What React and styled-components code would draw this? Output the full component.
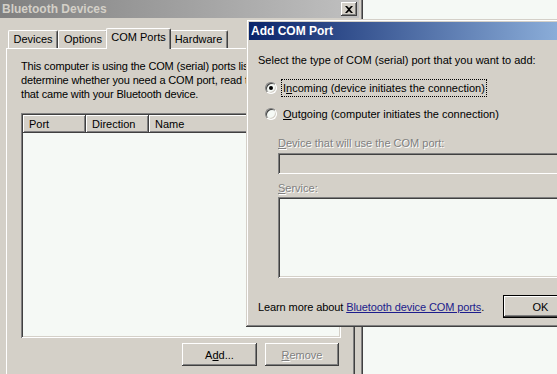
import React from 'react';
import styled, { createGlobalStyle, css } from 'styled-components';

const GlobalStyle = createGlobalStyle`
  html, body { margin: 0; padding: 0; }
  body {
    font-family: "Liberation Sans", Arial, sans-serif;
    font-size: 11px;
    color: #000;
  }
`;

const raised = css`
  box-shadow: inset -1px -1px #404040, inset 1px 1px #fff,
    inset -2px -2px #808080, inset 2px 2px #d4d0c8;
`;

const frame = css`
  box-shadow: inset -1px -1px #404040, inset 1px 1px #d4d0c8,
    inset -2px -2px #808080, inset 2px 2px #fff;
`;

const sunken = css`
  box-shadow: inset 1px 1px #808080, inset -1px -1px #fff,
    inset 2px 2px #404040, inset -2px -2px #d4d0c8;
`;

const Desktop = styled.div`
  position: relative;
  width: 557px;
  height: 374px;
  overflow: hidden;
  background: #f5f9f5;
`;

const Window = styled.div`
  position: absolute;
  left: ${(p) => p.$left}px;
  top: ${(p) => p.$top}px;
  width: ${(p) => p.$width}px;
  height: ${(p) => p.$height}px;
  box-sizing: border-box;
  padding: ${(p) => p.$pad}px;
  background: #d4d0c8;
  display: flex;
  flex-direction: column;
  ${frame}
`;

const TitleBar = styled.div`
  height: 18px;
  flex: none;
  display: flex;
  align-items: center;
  padding: 0 2px;
  background: ${(p) =>
    p.$active
      ? 'linear-gradient(to right, #0a246a, #a6caf0)'
      : 'linear-gradient(to right, #808080, #c0c0c0)'};
  color: ${(p) => (p.$active ? '#fff' : '#d4d0c8')};
  font-weight: bold;
  font-size: 12px;
`;

const TitleText = styled.span`
  flex: 1;
  white-space: nowrap;
`;

const CloseButton = styled.div`
  width: 16px;
  height: 14px;
  background: #d4d0c8;
  ${raised}
  display: flex;
  align-items: center;
  justify-content: center;
  svg { display: block; }
`;

const MainContent = styled.div`
  padding: 10px 4px 0 6px;
  display: flex;
  flex-direction: column;
`;

const TabStrip = styled.div`
  display: flex;
  align-items: flex-end;
  height: 20px;
  padding-left: 2px;
  position: relative;
  z-index: 1;
`;

const Tab = styled.div`
  box-sizing: border-box;
  width: ${(p) => p.$w}px;
  height: ${(p) => (p.$selected ? 21 : 18)}px;
  margin: ${(p) => (p.$selected ? '0 -2px -1px -2px' : '0')};
  position: relative;
  z-index: ${(p) => (p.$selected ? 2 : 1)};
  background: #d4d0c8;
  border-left: 1px solid #fff;
  border-top: 1px solid #fff;
  border-right: 1px solid #404040;
  border-radius: 2px 2px 0 0;
  box-shadow: inset -1px 0 #808080;
  display: flex;
  justify-content: center;
  padding-top: 2px;
  white-space: nowrap;
`;

const TabPanel = styled.div`
  width: 349px;
  height: 340px;
  box-sizing: border-box;
  border-top: 1px solid #fff;
  border-left: 1px solid #fff;
  border-right: 1px solid #404040;
  box-shadow: inset -1px 0 #808080;
  padding: 10px 0 0 14px;
`;

const Intro = styled.p`
  margin: 0;
  line-height: 14px;
  white-space: nowrap;
  letter-spacing: -0.15px;
`;

const ListView = styled.div`
  margin-top: 12px;
  width: 320px;
  height: 225px;
  box-sizing: border-box;
  padding: 2px;
  background: #f5f9f5;
  ${sunken}
`;

const HeaderRow = styled.div`
  display: flex;
  height: 18px;
`;

const HeaderCell = styled.div`
  box-sizing: border-box;
  width: ${(p) => (p.$w ? `${p.$w}px` : 'auto')};
  flex: ${(p) => (p.$w ? 'none' : '1')};
  background: #d4d0c8;
  ${raised}
  padding: 3px 0 0 6px;
`;

const ButtonRow = styled.div`
  width: 318px;
  display: flex;
  justify-content: flex-end;
  gap: 8px;
  margin-top: 5px;
`;

const Button = styled.div`
  box-sizing: border-box;
  width: ${(p) => p.$w}px;
  height: 23px;
  flex: none;
  background: #d4d0c8;
  display: flex;
  align-items: center;
  justify-content: center;
  color: ${(p) => (p.$disabled ? '#808080' : '#000')};
  text-shadow: ${(p) => (p.$disabled ? '1px 1px 0 #fff' : 'none')};
  ${(p) =>
    p.$default
      ? css`
          border: 1px solid #000;
          ${raised}
        `
      : raised}
`;

const DialogBody = styled.div`
  display: flex;
  flex-direction: column;
  padding: 0 0 0 9px;
`;

const Prompt = styled.div`
  margin-top: 14px;
  line-height: 13px;
  white-space: nowrap;
`;

const RadioRow = styled.div`
  display: flex;
  align-items: center;
  margin-top: ${(p) => p.$gap}px;
  padding-left: 7px;
  height: 18px;
`;

const Radio = styled.span`
  position: relative;
  width: 12px;
  height: 12px;
  box-sizing: border-box;
  border-radius: 50%;
  background: #f5f9f5;
  border: 1px solid;
  border-color: #808080 #fff #fff #808080;
  box-shadow: inset 1px 1px #404040, inset -1px -1px #d4d0c8;
  flex: none;
  &::after {
    content: '';
    display: ${(p) => (p.$checked ? 'block' : 'none')};
    position: absolute;
    left: 3px;
    top: 3px;
    width: 4px;
    height: 4px;
    border-radius: 50%;
    background: #000;
  }
`;

const RadioLabel = styled.span`
  margin-left: 4px;
  padding: 2px 1px;
  height: 18px;
  box-sizing: border-box;
  border: 1px dotted ${(p) => (p.$focused ? '#000' : 'transparent')};
  white-space: nowrap;
`;

const Field = styled.div`
  padding-left: 20px;
  display: flex;
  flex-direction: column;
`;

const FieldLabel = styled.div`
  margin-top: ${(p) => p.$gap}px;
  color: #808080;
  text-shadow: 1px 1px 0 #fff;
  line-height: 13px;
  white-space: nowrap;
`;

const ComboBox = styled.div`
  margin-top: 3px;
  height: 21px;
  background: #d4d0c8;
  ${sunken}
`;

const ServiceList = styled.div`
  margin-top: 2px;
  height: 81px;
  background: #f5f9f5;
  ${sunken}
`;

const Footer = styled.div`
  margin-top: 17px;
  display: flex;
  align-items: center;
`;

const FooterText = styled.div`
  width: 245px;
  white-space: nowrap;
  flex: none;
  letter-spacing: -0.1px;
`;

const Link = styled.span`
  color: #1c1c8c;
  text-decoration: underline;
`;

export default function App() {
  return (
    <Desktop>
      <GlobalStyle />
      <Window $left={-4} $top={-4} $width={367} $height={400} $pad={4}>
        <TitleBar>
          <TitleText>Bluetooth Devices</TitleText>
          <CloseButton>
            <svg width="8" height="7" viewBox="0 0 8 7">
              <path d="M0 0h2l2 2 2-2h2L5 3.5 8 7H6L4 5 2 7H0l3-3.5z" fill="#000" />
            </svg>
          </CloseButton>
        </TitleBar>
        <MainContent>
          <TabStrip>
            <Tab $w={50}>Devices</Tab>
            <Tab $w={50}>Options</Tab>
            <Tab $w={65} $selected>COM Ports</Tab>
            <Tab $w={59}>Hardware</Tab>
          </TabStrip>
          <TabPanel>
            <Intro>
              This computer is using the COM (serial) ports listed below. To
              <br />
              determine whether you need a COM port, read the documentation
              <br />
              that came with your Bluetooth device.
            </Intro>
            <ListView>
              <HeaderRow>
                <HeaderCell $w={63}>Port</HeaderCell>
                <HeaderCell $w={63}>Direction</HeaderCell>
                <HeaderCell>Name</HeaderCell>
              </HeaderRow>
            </ListView>
            <ButtonRow>
              <Button $w={75}>
                A<u>d</u>d...
              </Button>
              <Button $w={74} $disabled>
                <u>R</u>emove
              </Button>
            </ButtonRow>
          </TabPanel>
        </MainContent>
      </Window>

      <Window $left={246} $top={19} $width={380} $height={308} $pad={3}>
        <TitleBar $active>
          <TitleText>Add COM Port</TitleText>
        </TitleBar>
        <DialogBody>
          <Prompt>Select the type of COM (serial) port that you want to add:</Prompt>
          <RadioRow $gap={12}>
            <Radio $checked />
            <RadioLabel $focused>
              I<u>n</u>coming (device initiates the connection)
            </RadioLabel>
          </RadioRow>
          <RadioRow $gap={8}>
            <Radio />
            <RadioLabel>
              <u>O</u>utgoing (computer initiates the connection)
            </RadioLabel>
          </RadioRow>
          <Field>
            <FieldLabel $gap={14}>
              <u>D</u>evice that will use the COM port:
            </FieldLabel>
            <ComboBox />
            <FieldLabel $gap={8}>
              <u>S</u>ervice:
            </FieldLabel>
            <ServiceList />
          </Field>
          <Footer>
            <FooterText>
              Learn more about <Link>Bluetooth device COM ports</Link>.
            </FooterText>
            <Button $w={75} $default>
              OK
            </Button>
          </Footer>
        </DialogBody>
      </Window>
    </Desktop>
  );
}
